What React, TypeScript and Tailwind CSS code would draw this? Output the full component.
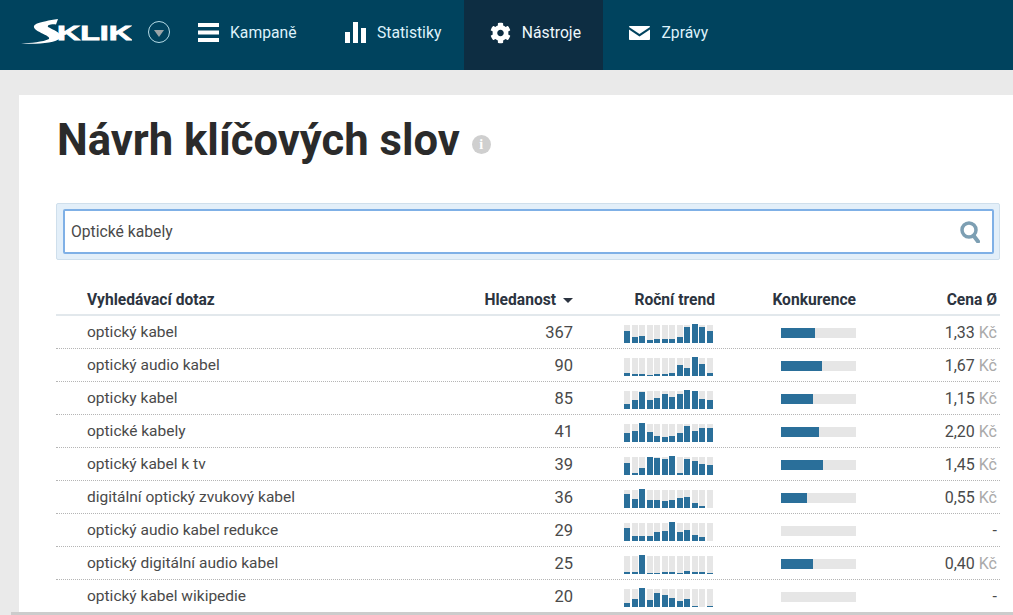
import { FaCog } from "react-icons/fa"

const rows = [
  { q: "optický kabel", n: 367, bars: [12, 6, 7, 3, 4, 4, 4, 6, 16, 19, 16, 12], comp: 34, price: "1,33" },
  { q: "optický audio kabel", n: 90, bars: [3, 2, 2, 1, 2, 2, 3, 11, 8, 19, 12, 3], comp: 41, price: "1,67" },
  { q: "opticky kabel", n: 85, bars: [5, 9, 17, 9, 11, 15, 12, 15, 19, 18, 10, 9], comp: 32, price: "1,15" },
  { q: "optické kabely", n: 41, bars: [9, 11, 19, 10, 6, 5, 6, 9, 16, 11, 14, 14], comp: 38, price: "2,20" },
  { q: "optický kabel k tv", n: 39, bars: [12, 2, 7, 18, 17, 16, 19, 2, 16, 14, 11, 10], comp: 42, price: "1,45" },
  { q: "digitální optický zvukový kabel", n: 36, bars: [14, 9, 19, 8, 8, 7, 8, 10, 11, 5, 2, 0], comp: 26, price: "0,55" },
  { q: "optický audio kabel redukce", n: 29, bars: [13, 5, 5, 5, 9, 10, 19, 9, 11, 6, 4, 0], comp: 0, price: "" },
  { q: "optický digitální audio kabel", n: 25, bars: [2, 2, 19, 1, 1, 2, 2, 1, 3, 2, 2, 1], comp: 32, price: "0,40" },
  { q: "optický kabel wikipedie", n: 20, bars: [4, 8, 19, 7, 14, 12, 9, 6, 8, 1, 0, 1], comp: 0, price: "" },
]

function Logo() {
  return (
    <svg width="111" height="26" viewBox="0 0 111 26" className="mb-[6px] shrink-0">
      <path d="M0 24.5C10 24 22 23 28 20C30 17 18 14 14 10C10 5 18 3 37 0L35 5.5C30 5 26 6 27 8C32 11 41 13 39 19C35 24.5 14 25.5 0 24.5Z" fill="#fff" />
      <text x="36" y="21" fill="#fff" stroke="#fff" strokeWidth="0.8" fontFamily="Liberation Sans, sans-serif" fontSize="21" fontWeight="700" textLength="75" lengthAdjust="spacingAndGlyphs">KLIK</text>
    </svg>
  )
}

function MenuIcon() {
  return (
    <svg width="21" height="19" viewBox="0 0 21 19" fill="#fff">
      <rect width="21" height="4" />
      <rect y="7.5" width="21" height="4" />
      <rect y="15" width="21" height="4" />
    </svg>
  )
}

function StatsIcon() {
  return (
    <svg width="21" height="21" viewBox="0 0 21 21" fill="#fff">
      <rect y="10" width="5" height="11" />
      <rect x="8" width="5" height="21" />
      <rect x="16" y="6" width="5" height="15" />
    </svg>
  )
}

function MailIcon() {
  return (
    <svg width="21" height="14" viewBox="0 0 21 14" fill="#fff">
      <path d="M1 0H20C20.5 0 21 .4 21 1L10.5 8L0 1C0 .4 .5 0 1 0Z" />
      <path d="M0 3.5L10.5 10.5L21 3.5V13C21 13.6 20.5 14 20 14H1C.5 14 0 13.6 0 13Z" />
    </svg>
  )
}

function NavItem({ icon, label, active }: { icon: React.ReactNode; label: string; active?: boolean }) {
  return (
    <a className={`flex h-full items-center gap-[11px] pb-[5px] pl-[26px] pr-[22.5px] text-[15.7px] ${active ? "bg-[#0d2d42] text-[#eef8fc]" : "text-[#def2fb]"}`}>
      <span className="flex w-[21px] justify-center">{icon}</span>
      {label}
    </a>
  )
}

function Trend({ bars }: { bars: number[] }) {
  return (
    <div className="flex h-[19px] w-[89px] items-end gap-[1.5px]">
      {bars.map((h, i) => (
        <div key={i} className="flex h-[18px] w-[6px] items-end bg-[#e6e6e6]">
          <div className="w-full shrink-0 bg-[#2a6f9a]" style={{ height: h }} />
        </div>
      ))}
    </div>
  )
}

const gridClass = "grid grid-cols-[401px_116px_142px_141px_1fr] items-center"

export default function App() {
  return (
    <div className="flex h-[615px] flex-col overflow-hidden bg-[#eaeaea] font-['Roboto',sans-serif] text-[#444]">
      <header className="flex h-[70px] shrink-0 items-center bg-[#00435e] pl-[21px]">
        <Logo />
        <span className="mb-[6px] ml-[16px] mr-[2px] flex h-[22px] w-[22px] items-center justify-center rounded-full border border-[#b5dbe6] pt-[2px]">
          <svg width="10" height="7" viewBox="0 0 10 7" fill="#9aa5a8">
            <path d="M0 0H10L5 7Z" />
          </svg>
        </span>
        <NavItem icon={<MenuIcon />} label="Kampaně" />
        <NavItem icon={<StatsIcon />} label="Statistiky" />
        <NavItem icon={<FaCog className="h-[22px] w-[22px] text-white" />} label="Nástroje" active />
        <NavItem icon={<MailIcon />} label="Zprávy" />
      </header>

      <main className="ml-[19px] mt-[25px] flex-1 overflow-hidden bg-white pl-[37px] pr-[13px]">
        <div className="flex h-[108px] items-start pt-[19px]">
          <h1 className="ml-[1px] text-[43.6px] font-bold leading-[54px] text-[#2b2b2b]">Návrh klíčových slov</h1>
          <span className="ml-[12px] mt-[21px] flex h-[19px] w-[19px] items-center justify-center rounded-full bg-[#cfcfcf] font-['Liberation_Serif',serif] text-[14px] font-bold text-white">i</span>
        </div>

        <div className="rounded-[2px] border border-[#cfdfec] bg-[#e3eff9] py-[5px] pl-[6px] pr-[5px]">
          <div className="flex h-[45px] items-center justify-between rounded-[2px] border-2 border-[#7fb0e6] bg-white pl-[6px] pr-[12px]">
            <span className="pt-[1px] text-[15.7px] text-[#4a4a4a]">Optické kabely</span>
            <svg width="20" height="22" viewBox="0 0 20 22" fill="none" stroke="#7d9fb3">
              <circle cx="9" cy="9" r="7" strokeWidth="3.5" />
              <path d="M13.5 14.5L18 20.5" strokeWidth="4" strokeLinecap="round" />
            </svg>
          </div>
        </div>

        <div className={`${gridClass} mt-[24px] h-[32px] border-b-2 border-[#e2e8ec] pt-[3px] text-[15.6px] font-bold text-[#2c3440]`}>
          <div className="pl-[31px]">Vyhledávací dotaz</div>
          <div className="flex items-center justify-end gap-[7px]">
            Hledanost
            <svg width="10" height="5" viewBox="0 0 10 5" fill="#2c3440">
              <path d="M0 0H10L5 5Z" />
            </svg>
          </div>
          <div className="text-right">Roční trend</div>
          <div className="text-right">Konkurence</div>
          <div className="pr-[3px] text-right">Cena Ø</div>
        </div>

        {rows.map((r) => (
          <div key={r.q} className={`${gridClass} h-[33px] border-b border-dotted border-[#b5b5b5] pt-[2px] text-[15.5px] text-[#4a4a4a]`}>
            <div className="pl-[31px]">{r.q}</div>
            <div className="text-right text-[16.5px]">{r.n}</div>
            <div className="flex justify-end pr-[2px]">
              <Trend bars={r.bars} />
            </div>
            <div className="flex justify-end">
              <div className="h-[10px] w-[75px] bg-[#e6e6e6]">
                <div className="h-full bg-[#2a6f9a]" style={{ width: r.comp }} />
              </div>
            </div>
            <div className="pr-[3px] text-right text-[16px]">
              {r.price ? (
                <>
                  {r.price} <span className="text-[#aaa]">Kč</span>
                </>
              ) : (
                "-"
              )}
            </div>
          </div>
        ))}
      </main>

      <div className="ml-[11px] h-[3px] shrink-0 bg-[#cccccc]" />
    </div>
  )
}
